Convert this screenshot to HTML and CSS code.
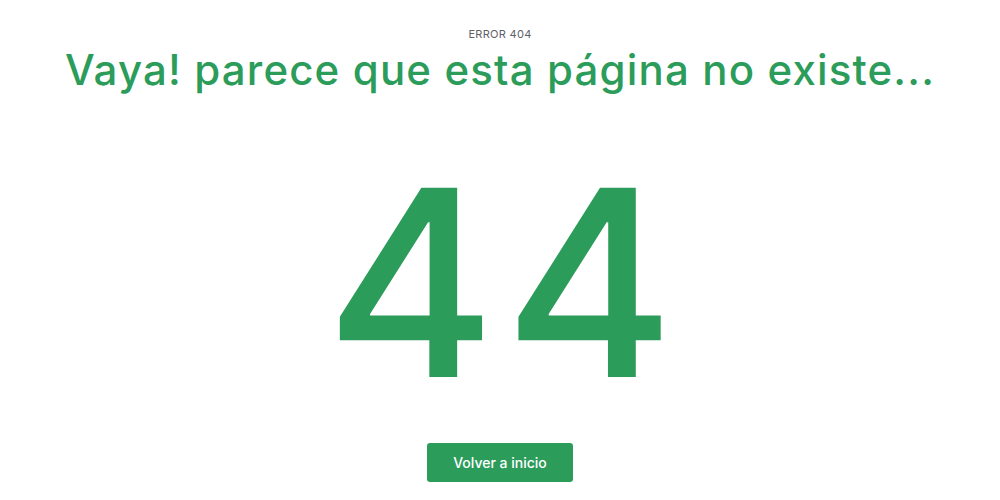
FILE: index.html
```html
<!DOCTYPE html>
<html lang="es">
<head>
<meta charset="utf-8">
<title>Error 404</title>
<link rel="stylesheet" href="styles.css">
</head>
<body>
<main class="page">
  <p class="eyebrow">ERROR 404</p>
  <h1 class="title">Vaya! parece que esta página no existe...</h1>
  <div class="code">44</div>
  <a class="btn" href="#">Volver a inicio</a>
</main>
</body>
</html>
```

FILE: styles.css
```css
* { box-sizing: border-box; }
html, body { margin: 0; padding: 0; background: #fff; }
body { font-family: Inter, "Noto Sans", sans-serif; }
.page {
  display: flex;
  flex-direction: column;
  align-items: center;
  padding-top: 26px;
}
.eyebrow {
  margin: 0;
  font-size: 11px;
  line-height: 16px;
  color: #5f5f66;
  letter-spacing: 0.3px;
}
.title {
  margin: 2px 0 0;
  font-size: 42px;
  line-height: 52px;
  font-weight: 500;
  color: #2c9c5b;
  letter-spacing: 1.15px;
}
.code {
  margin-top: 62px;
  font-size: 260px;
  line-height: 250px;
  font-weight: 500;
  color: #2c9c5b;
  letter-spacing: 8px;
  padding-left: 8px;
}
.btn {
  margin-top: 35px;
  display: flex;
  align-items: center;
  justify-content: center;
  width: 146px;
  height: 39px;
  background: #2c9c5b;
  color: #fff;
  border-radius: 3px;
  font-size: 14px;
  font-weight: 500;
  text-decoration: none;
}
```
